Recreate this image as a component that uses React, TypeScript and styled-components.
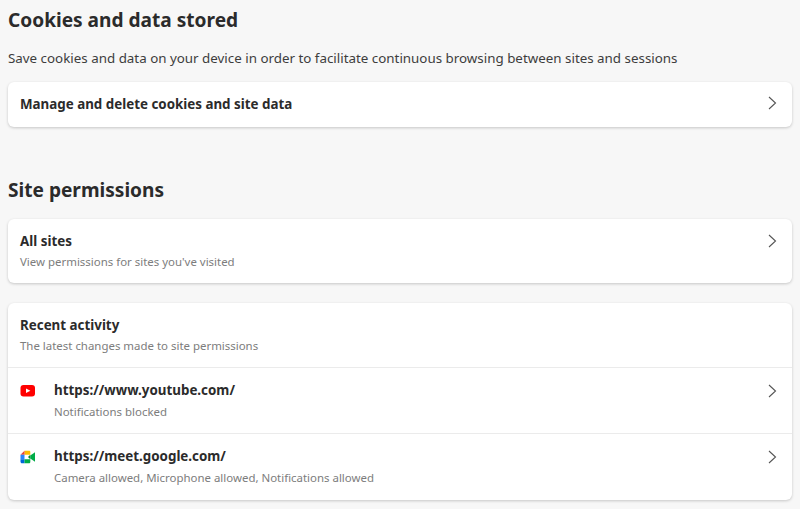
import styled, { createGlobalStyle } from 'styled-components';

const GlobalStyle = createGlobalStyle`
  html, body {
    margin: 0;
    padding: 0;
    height: 100%;
    overflow: hidden;
    background: #f7f7f7;
    font-family: "Noto Sans", "Open Sans", sans-serif;
    color: #2b2b2b;
  }
`;

function Chevron() {
  return (
    <ChevronBox viewBox="0 0 16 16" aria-hidden="true">
      <path d="M5 2 L11.5 8 L5 14" fill="none" stroke="#555" strokeWidth="1.1" />
    </ChevronBox>
  );
}

function YoutubeIcon() {
  return (
    <svg width="16" height="16" viewBox="0 0 16 16" aria-hidden="true">
      <rect x="0.5" y="2" width="14.5" height="11.5" rx="3" fill="#f00" />
      <path d="M6 5.4 L10.4 7.75 L6 10.1 Z" fill="#fff" />
    </svg>
  );
}

function MeetIcon() {
  return (
    <svg width="16" height="16" viewBox="0 0 16 16" aria-hidden="true">
      <path d="M4.5 1.75 H9 C9.8 1.75 10.3 2.25 10.3 3.05 V5.8 H4.5 Z" fill="#fbbc04" />
      <path d="M0.5 5.75 L4.5 1.75 V5.75 Z" fill="#ea4335" />
      <path d="M0.5 5.75 H4.5 V10.25 H0.5 Z" fill="#2684fc" />
      <path d="M0.5 10.25 H4.5 V14.25 H2 C1.1 14.25 0.5 13.65 0.5 12.75 Z" fill="#0066da" />
      <path d="M4.5 10.2 H10.3 V12.95 C10.3 13.75 9.8 14.25 9 14.25 H4.5 Z" fill="#00ac47" />
      <path d="M8 8 L10.3 5.8 V10.2 Z" fill="#00832d" />
      <path d="M10.3 6.5 L15 3.2 V12.8 L10.3 9.5 Z" fill="#00ac47" />
    </svg>
  );
}

export default function App() {
  return (
    <>
      <GlobalStyle />
      <Page>
        <Heading>Cookies and data stored</Heading>
        <Description>
          Save cookies and data on your device in order to facilitate continuous browsing between sites and sessions
        </Description>
        <Card>
          <SingleRow>
            <RowTitle>Manage and delete cookies and site data</RowTitle>
            <Chevron />
          </SingleRow>
        </Card>

        <SecondHeading>Site permissions</SecondHeading>
        <Card>
          <TextRow>
            <div>
              <RowTitle>All sites</RowTitle>
              <RowSub>View permissions for sites you've visited</RowSub>
            </div>
            <Chevron />
          </TextRow>
        </Card>

        <ActivityCard>
          <ActivityHeader>
            <RowTitle>Recent activity</RowTitle>
            <RowSub>The latest changes made to site permissions</RowSub>
          </ActivityHeader>
          <SiteRow>
            <SiteIcon><YoutubeIcon /></SiteIcon>
            <SiteText>
              <RowTitle>https://www.youtube.com/</RowTitle>
              <RowSub>Notifications blocked</RowSub>
            </SiteText>
            <Chevron />
          </SiteRow>
          <SiteRow>
            <SiteIcon><MeetIcon /></SiteIcon>
            <SiteText>
              <RowTitle>https://meet.google.com/</RowTitle>
              <RowSub>Camera allowed, Microphone allowed, Notifications allowed</RowSub>
            </SiteText>
            <Chevron />
          </SiteRow>
        </ActivityCard>
      </Page>
    </>
  );
}

const Page = styled.div`
  padding: 6px 8px 0;
`;

const Heading = styled.h2`
  margin: 0;
  font-size: 19.1px;
  line-height: 28px;
  font-weight: 700;
`;

const SecondHeading = styled(Heading)`
  margin: 49px 0 15px;
`;

const Description = styled.p`
  margin: 14px 0 0;
  font-size: 13.36px;
  line-height: 20px;
  color: #3d3d3d;
`;

const Card = styled.section`
  margin-top: 14px;
  background: #fff;
  border-radius: 6px;
  box-shadow: 0 1px 3px rgba(0, 0, 0, 0.2);
`;

const SingleRow = styled.div`
  height: 45px;
  box-sizing: border-box;
  padding: 0 12px 2px;
  display: flex;
  align-items: center;
  justify-content: space-between;

  > svg {
    margin: 0 0 1px;
  }
`;

const TextRow = styled.div`
  height: 64px;
  box-sizing: border-box;
  padding: 12px 12px 0;
  display: flex;
  align-items: flex-start;
  justify-content: space-between;
`;

const RowTitle = styled.div`
  font-size: 13.36px;
  line-height: 20px;
  font-weight: 700;
`;

const RowSub = styled.div`
  font-size: 11.45px;
  line-height: 16px;
  margin-top: 3px;
  color: #7d7d7d;
`;

const ActivityCard = styled(Card)`
  margin-top: 20px;
`;

const ActivityHeader = styled.div`
  height: 64px;
  box-sizing: border-box;
  padding: 12px 12px 0;
`;

const SiteRow = styled.div`
  height: 66px;
  box-sizing: border-box;
  padding: 12px 12px 0;
  border-top: 1px solid #ebebeb;
  display: flex;
  align-items: flex-start;

  &:last-child {
    height: 67px;
  }

  ${RowSub} {
    margin-top: 4px;
  }

  > svg {
    margin-top: 3px;
  }
`;

const SiteIcon = styled.div`
  width: 34px;
  height: 20px;
  margin-top: 1px;
  display: flex;
  align-items: center;
`;

const SiteText = styled.div`
  flex: 1;
`;

const ChevronBox = styled.svg`
  width: 16px;
  height: 16px;
  flex-shrink: 0;
  margin-top: 2px;
`;
